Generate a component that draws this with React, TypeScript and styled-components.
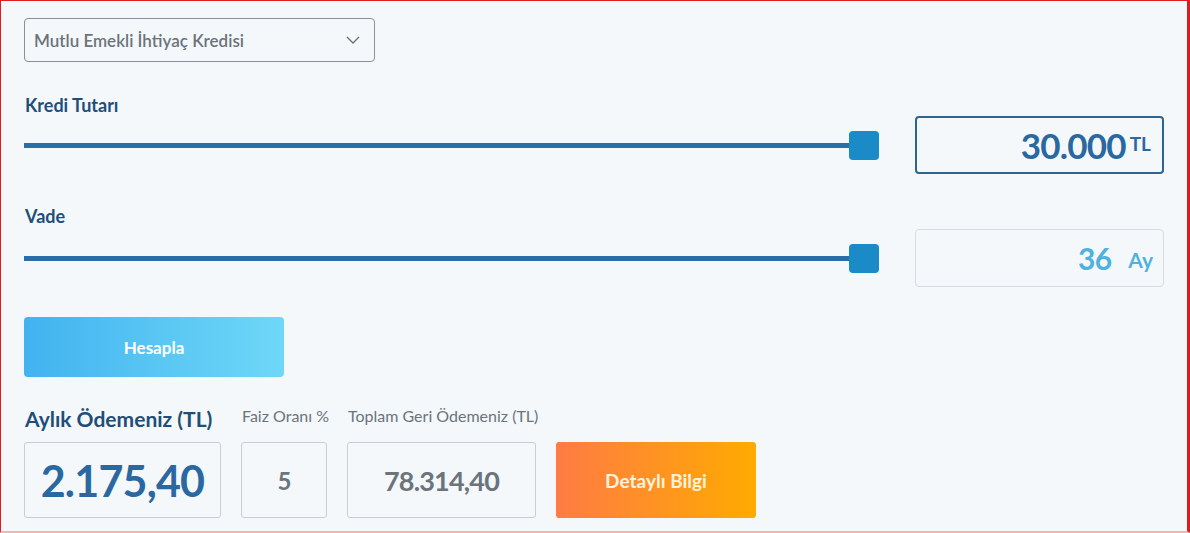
import React from "react";
import styled, { createGlobalStyle } from "styled-components";

const Global = createGlobalStyle`
  html, body { margin: 0; padding: 0; background: #f4f8fb; }
  body { font-family: "Lato", "Noto Sans", sans-serif; }
  * { box-sizing: border-box; }
`;

const Frame = styled.div`
  width: 1190px;
  height: 533px;
  border-left: 1px solid #e01b1b;
  border-top: 1px solid #e01b1b;
  border-right: 3px solid #e01b1b;
  border-bottom: 2px solid #f6b3b6;
  background: #f4f8fb;
  padding: 17px 23px 0 23px;
  display: flex;
  flex-direction: column;
  overflow: hidden;
`;

const Select = styled.div`
  width: 351px;
  height: 44px;
  border: 1px solid #8b9096;
  border-radius: 4px;
  display: flex;
  align-items: center;
  justify-content: space-between;
  padding: 0 14px 0 9px;
  color: #6b737b;
  font-size: 17px;
  font-weight: 600;
`;

const Label = styled.div<{ $top: number }>`
  margin-top: ${(p) => p.$top}px;
  color: #1f4e79;
  font-size: 18px;
  font-weight: 700;
  line-height: 20px;
  padding-left: 1px;
`;

const SliderRow = styled.div<{ $top: number }>`
  margin-top: ${(p) => p.$top}px;
  display: flex;
  align-items: center;
  gap: 36px;
`;

const Slider = styled.div`
  flex: 1;
  display: flex;
  align-items: center;
`;

const Track = styled.div`
  flex: 1;
  height: 5px;
  background: #2a6da8;
`;

const Thumb = styled.div`
  width: 30px;
  height: 29px;
  margin-left: -12px;
  border-radius: 4px;
  background: #1b8bc7;
`;

const ValueBox = styled.div<{ $active?: boolean }>`
  width: 249px;
  height: 58px;
  border: ${(p) => (p.$active ? "2px solid #2c6592" : "1px solid #d6dce1")};
  border-radius: 4px;
  display: flex;
  align-items: center;
  justify-content: flex-end;
  padding-right: ${(p) => (p.$active ? "11px" : "10px")};
  color: ${(p) => (p.$active ? "#2a68a1" : "#4fb1e0")};
`;

const BigNum = styled.span<{ $size: number }>`
  font-size: ${(p) => p.$size}px;
  font-weight: 700;
  letter-spacing: -0.8px;
`;

const Unit = styled.span<{ $size: number; $gap: number; $lift: number }>`
  font-size: ${(p) => p.$size}px;
  font-weight: 700;
  margin-left: ${(p) => p.$gap}px;
  margin-top: ${(p) => p.$lift}px;
`;

const Hesapla = styled.button`
  margin-top: 30px;
  width: 260px;
  height: 60px;
  border: none;
  border-radius: 4px;
  background: linear-gradient(90deg, #41b3ef 0%, #6fd8f8 100%);
  color: #ffffff;
  font-family: inherit;
  font-size: 17px;
  font-weight: 700;
  padding: 0;
`;

const Results = styled.div`
  margin-top: 29px;
  display: flex;
  align-items: flex-end;
  gap: 20px;
`;

const Col = styled.div<{ $w: number }>`
  width: ${(p) => p.$w}px;
  display: flex;
  flex-direction: column;
`;

const MainLabel = styled.div`
  color: #1f4e79;
  font-size: 21px;
  font-weight: 700;
  line-height: 26px;
  height: 26px;
  margin-bottom: 10px;
  padding-left: 1px;
  white-space: nowrap;
`;

const SmallLabel = styled.div`
  color: #6b737b;
  font-size: 16px;
  font-weight: 400;
  line-height: 20px;
  height: 26px;
  margin-bottom: 10px;
  padding-left: 1px;
  white-space: nowrap;
`;

const Box = styled.div`
  width: 100%;
  height: 76px;
  border: 1px solid #c8ced4;
  border-radius: 3px;
  display: flex;
  align-items: center;
  justify-content: center;
`;

const BoxText = styled.span<{ $size: number; $color: string }>`
  font-size: ${(p) => p.$size}px;
  font-weight: 700;
  color: ${(p) => p.$color};
  letter-spacing: -0.8px;
`;

const Detay = styled.button`
  width: 200px;
  height: 76px;
  border: none;
  border-radius: 3px;
  background: linear-gradient(90deg, #ff7b44 0%, #ffab00 100%);
  color: #fff3dc;
  font-family: inherit;
  font-size: 19px;
  font-weight: 700;
  padding: 0;
`;

const Chevron = () => (
  <svg width="14" height="8" viewBox="0 0 14 8" fill="none">
    <path d="M1 1l6 6 6-6" stroke="#6b737b" strokeWidth="1.4" />
  </svg>
);

export default function App() {
  return (
    <>
      <Global />
      <Frame>
        <Select>
          <span>Mutlu Emekli İhtiyaç Kredisi</span>
          <Chevron />
        </Select>

        <Label $top={33}>Kredi Tutarı</Label>
        <SliderRow $top={1}>
          <Slider>
            <Track />
            <Thumb />
          </Slider>
          <ValueBox $active>
            <BigNum $size={35}>30.000</BigNum>
            <Unit $size={19} $gap={4} $lift={-3}>TL</Unit>
          </ValueBox>
        </SliderRow>

        <Label $top={32}>Vade</Label>
        <SliderRow $top={3}>
          <Slider>
            <Track />
            <Thumb />
          </Slider>
          <ValueBox>
            <BigNum $size={30}>36</BigNum>
            <Unit $size={21} $gap={17} $lift={2}>Ay</Unit>
          </ValueBox>
        </SliderRow>

        <Hesapla>Hesapla</Hesapla>

        <Results>
          <Col $w={197}>
            <MainLabel>Aylık Ödemeniz (TL)</MainLabel>
            <Box>
              <BoxText $size={43} $color="#2a68a1">2.175,40</BoxText>
            </Box>
          </Col>
          <Col $w={86}>
            <SmallLabel>Faiz Oranı %</SmallLabel>
            <Box>
              <BoxText $size={24} $color="#6b737b">5</BoxText>
            </Box>
          </Col>
          <Col $w={189}>
            <SmallLabel>Toplam Geri Ödemeniz (TL)</SmallLabel>
            <Box>
              <BoxText $size={27} $color="#6b737b">78.314,40</BoxText>
            </Box>
          </Col>
          <Detay>Detaylı Bilgi</Detay>
        </Results>
      </Frame>
    </>
  );
}
